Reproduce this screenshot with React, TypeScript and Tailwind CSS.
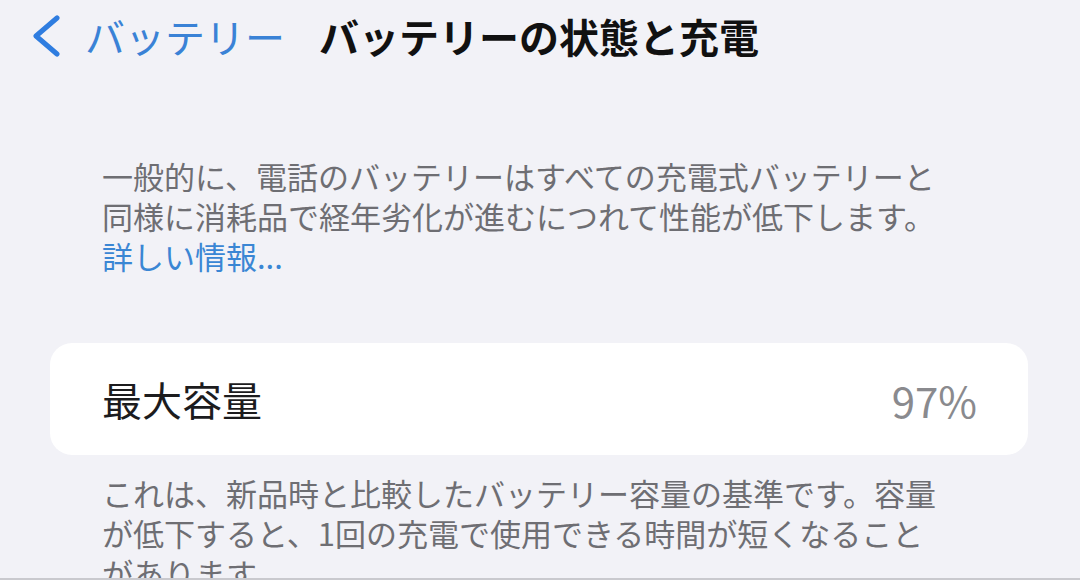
export default function App() {
  return (
    <div
      className="w-[1080px] h-[580px] overflow-hidden bg-[#f2f2f7] border-b-2 border-[#c9c9ce]"
      style={{ fontFamily: '"Noto Sans CJK JP", "Noto Sans", sans-serif' }}
    >
      {/* ナビゲーションバー */}
      <div className="flex items-center h-[72px] pl-[31px]">
        <svg width="30" height="42" viewBox="0 0 30 42" className="mr-[24px]">
          <path
            d="M26 3 L5 21 L26 39"
            fill="none"
            stroke="#2f7de0"
            strokeWidth="5"
            strokeLinecap="round"
            strokeLinejoin="round"
          />
        </svg>
        <span className="text-[40px] leading-none text-[#3a82d6]">バッテリー</span>
        <span className="ml-[34px] text-[40px] leading-none font-bold text-[#111]">
          バッテリーの状態と充電
        </span>
      </div>

      {/* 説明 */}
      <div className="mt-[84px] pl-[102px] pr-[100px] text-[31px] leading-[40px] text-[#6e6e73]">
        <p>一般的に、電話のバッテリーはすべての充電式バッテリーと</p>
        <p>同様に消耗品で経年劣化が進むにつれて性能が低下します。</p>
        <p className="text-[#3a86d4]">詳しい情報...</p>
      </div>

      {/* 最大容量 */}
      <div className="mt-[67px] ml-[50px] mr-[52px] h-[112px] rounded-[22px] bg-white flex items-center justify-between pl-[52px] pr-[51px]">
        <span className="text-[40px] text-[#1c1c1e]">最大容量</span>
        <span className="text-[42px] text-[#8a8a8e]">97%</span>
      </div>

      <div className="mt-[18px] pl-[102px] pr-[100px] text-[31px] leading-[40px] text-[#6e6e73]">
        <p>これは、新品時と比較したバッテリー容量の基準です。容量</p>
        <p>が低下すると、1回の充電で使用できる時間が短くなること</p>
        <p>があります。</p>
      </div>
    </div>
  );
}
